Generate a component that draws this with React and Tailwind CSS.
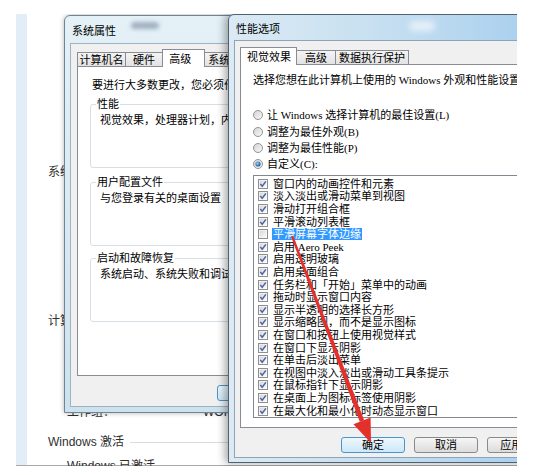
const F = "font-['Liberation_Serif','Noto_Sans_CJK_SC',serif]";

const effects = [
  { t: "窗口内的动画控件和元素", on: true },
  { t: "淡入淡出或滑动菜单到视图", on: true },
  { t: "滑动打开组合框", on: true },
  { t: "平滑滚动列表框", on: true },
  { t: "平滑屏幕字体边缘", on: false, sel: true },
  { t: "启用 Aero Peek", on: true },
  { t: "启用透明玻璃", on: true },
  { t: "启用桌面组合", on: true },
  { t: "任务栏和「开始」菜单中的动画", on: true },
  { t: "拖动时显示窗口内容", on: true },
  { t: "显示半透明的选择长方形", on: true },
  { t: "显示缩略图，而不是显示图标", on: true },
  { t: "在窗口和按钮上使用视觉样式", on: true },
  { t: "在窗口下显示阴影", on: true },
  { t: "在单击后淡出菜单", on: true },
  { t: "在视图中淡入淡出或滑动工具条提示", on: true },
  { t: "在鼠标指针下显示阴影", on: true },
  { t: "在桌面上为图标标签使用阴影", on: true },
  { t: "在最大化和最小化时动态显示窗口", on: true },
];

const radios = [
  { t: "让 Windows 选择计算机的最佳设置(L)" },
  { t: "调整为最佳外观(B)" },
  { t: "调整为最佳性能(P)" },
  { t: "自定义(C):", on: true },
];

function Check({ on }) {
  return (
    <svg width="10" height="10" viewBox="0 0 10 10" className="shrink-0">
      <defs>
        <linearGradient id="cbg" x1="0" y1="0" x2="1" y2="1">
          <stop offset="0" stopColor="#d6d6d6" />
          <stop offset="1" stopColor="#fbfbfb" />
        </linearGradient>
      </defs>
      <rect x="0.5" y="0.5" width="9" height="9" fill="#fff" stroke="#8f8f8f" />
      <rect x="1.5" y="1.5" width="7" height="7" fill="url(#cbg)" />
      {on && <path d="M2.3 4.9 L4.2 7.3 L7.9 2.4" fill="none" stroke="#4a64a6" strokeWidth="1.5" />}
    </svg>
  );
}

function Radio({ on }) {
  return (
    <svg width="10" height="10" viewBox="0 0 10 10" className="shrink-0">
      <defs>
        <linearGradient id="rbg" x1="0" y1="0" x2="1" y2="1">
          <stop offset="0" stopColor="#d2d2d2" />
          <stop offset="1" stopColor="#fafafa" />
        </linearGradient>
        <radialGradient id="rdot" cx="0.4" cy="0.4" r="0.6">
          <stop offset="0" stopColor="#8ed0f8" />
          <stop offset="1" stopColor="#1f5b9a" />
        </radialGradient>
      </defs>
      <circle cx="5" cy="5" r="4.5" fill="url(#rbg)" stroke="#949494" />
      {on && <circle cx="5" cy="5" r="2.6" fill="url(#rdot)" />}
    </svg>
  );
}

function Btn({ children, main }) {
  return (
    <div
      className={`w-[64px] h-[16px] shrink-0 rounded-[3px] border flex items-center justify-center text-[11px] leading-[14px] bg-linear-to-b ${
        main ? "border-[#4a95cc] from-[#eef7fd] to-[#cde8f8]" : "border-[#8a8a8a] from-[#f6f6f6] to-[#dcdcdc]"
      }`}
    >
      {children}
    </div>
  );
}

function Tab({ children, w, sel }) {
  return sel ? (
    <div className={`${w} h-[18px] -mb-px -ml-px z-10 bg-white border border-b-0 border-[#898c95] flex items-start pt-[1px] pl-[6px]`}>
      {children}
    </div>
  ) : (
    <div className={`${w} h-[14px] -ml-px first:ml-0 bg-linear-to-b from-[#f4f4f4] to-[#e2e2e2] border border-b-0 border-[#898c95] flex items-center justify-center leading-[12px]`}>
      {children}
    </div>
  );
}

function Group({ label, text, className }) {
  return (
    <div className={`relative ml-[12px] w-[300px] h-[64px] border border-[#d5dfe5] rounded-[3px] pt-[8px] pl-[9px] ${className}`}>
      <span className="absolute -top-[8px] left-[5px] bg-white px-[1px] leading-[14px]">{label}</span>
      <p className="leading-[14px] whitespace-nowrap">{text}</p>
    </div>
  );
}

export default function App() {
  return (
    <div className="relative w-[540px] h-[475px] bg-white overflow-hidden text-black">
      <div className="relative ml-[16px] mt-[14px] w-[501px] h-[452px] overflow-hidden">
        {/* 控制面板 - 系统 页面（背景） */}
        <div className="flex h-[452px] border-b border-[#a8a8a8]">
          <div className="w-[11px] bg-[#e3edf8]" />
          <div className="flex-1 flex flex-col pl-[21px] text-[12px] text-[#2f2f2f] font-['Liberation_Sans','Noto_Sans_CJK_SC',sans-serif] whitespace-nowrap">
            <p className="mt-[150px] leading-[16px]">系统</p>
            <p className="mt-[133px] leading-[16px]">计算机名称、域和工作组设置</p>
            <div className="mt-[75px] flex leading-[16px] pl-[19px]">
              <span className="w-[136px]">工作组：</span>
              <span>WORKGROUP</span>
            </div>
            <div className="mt-[14px] flex items-center leading-[16px]">
              <span>Windows 激活</span>
              <div className="flex-1 ml-[6px] border-t border-[#dcdcdc]" />
            </div>
            <p className="mt-[8px] pl-[19px] leading-[16px]">Windows 已激活</p>
          </div>
        </div>

        {/* 系统属性 */}
        <div className={`absolute left-[48px] top-[1px] w-[200px] h-[398px] rounded-t-[6px] border border-[#6f8494] bg-linear-to-b from-[#e4f1f7] to-[#cde2ee] shadow-[0_0_5px_rgba(0,0,0,0.3)] flex flex-col px-[5px] pb-[5px] text-[11px] ${F}`}>
          <div className="absolute left-[66px] top-[6px] w-[28px] h-[7px] rounded-full bg-[#8e9fb2] blur-[2px] opacity-80" />
          <div className="h-[27px] shrink-0 flex items-center pl-[2px] pt-[2px] leading-[14px]">系统属性</div>
          <div className="flex-1 bg-[#f0f0f0] border border-[#9db3c3] flex flex-col overflow-hidden">
            <div className="h-[22px] shrink-0 flex items-end pl-[6px] whitespace-nowrap">
              <Tab w="w-[55px]">计算机名</Tab>
              <Tab w="w-[43px]">硬件</Tab>
              <Tab w="w-[47px]" sel>高级</Tab>
              <Tab w="w-[60px]">系统保护</Tab>
            </div>
            <div className="ml-[6px] w-[240px] h-[310px] shrink-0 bg-white border border-[#898c95] pt-[11px]">
              <p className="pl-[14px] leading-[14px] whitespace-nowrap">要进行大多数更改，您必须作为管理员登录。</p>
              <Group className="mt-[12px]" label="性能" text="视觉效果，处理器计划，内存使用，以及虚拟内存" />
              <Group className="mt-[14px]" label="用户配置文件" text="与您登录有关的桌面设置" />
              <Group className="mt-[12px]" label="启动和故障恢复" text="系统启动、系统失败和调试信息" />
            </div>
            <div className="mt-[9px] pl-[146px] flex">
              <Btn main>确定</Btn>
            </div>
          </div>
        </div>

        {/* 性能选项 */}
        <div className={`absolute left-[212px] top-0 w-[310px] h-[449px] rounded-t-[6px] border border-[#4f6272] bg-linear-to-r from-[#dbeaf4] via-[#c6dff0] to-[#a7cfee] shadow-[-3px_0_8px_rgba(0,0,0,0.35)] flex flex-col px-[5px] pb-[4px] text-[11px] ${F}`}>
          <div className="absolute left-[180px] top-[6px] w-[26px] h-[10px] rounded-full bg-white blur-[3px] opacity-60" />
          <div className="h-[25px] shrink-0 flex items-center pl-[2px] pt-[3px] leading-[14px]">性能选项</div>
          <div className="flex-1 bg-[#f0f0f0] border border-[#8ea3b6] flex flex-col overflow-hidden">
            <div className="h-[23px] shrink-0 flex items-end pl-[6px] whitespace-nowrap">
              <Tab w="w-[57px]" sel>视觉效果</Tab>
              <Tab w="w-[40px]">高级</Tab>
              <Tab w="w-[74px]">数据执行保护</Tab>
            </div>
            <div className="ml-[5px] w-[300px] h-[364px] shrink-0 bg-white border border-[#898c95] pt-[8px] pl-[12px] whitespace-nowrap">
              <p className="leading-[14px]">选择您想在此计算机上使用的 Windows 外观和性能设置</p>
              <div className="mt-[20px] flex flex-col">
                {radios.map((r) => (
                  <div key={r.t} className="h-[16.4px] flex items-center gap-[4px] leading-[14px]">
                    <Radio on={r.on} />
                    <span>{r.t}</span>
                  </div>
                ))}
              </div>
              <div className="mt-[2px] h-[243px] border border-[#828790] py-[2px] pl-[4px]">
                {effects.map((e) => (
                  <div key={e.t} className="h-[12.6px] flex items-center gap-[5px] leading-[12px]">
                    <Check on={e.on} />
                    <span className={e.sel ? "-ml-px px-px bg-[#3399ff] text-white" : ""}>{e.t}</span>
                  </div>
                ))}
              </div>
            </div>
            <div className="mt-[9px] pl-[106px] flex gap-[9px]">
              <Btn main>确定</Btn>
              <Btn>取消</Btn>
              <Btn>应用(A)</Btn>
            </div>
          </div>
        </div>
      </div>

      {/* 红色箭头 */}
      <svg className="absolute inset-0 pointer-events-none" width="540" height="475" viewBox="0 0 540 475">
        <polygon points="291,236.5 293.2,235.6 364.2,420.2 359.8,421.8" fill="#e3302b" />
        <polygon points="371,443 370.6,417.6 353.4,424.2" fill="#e3302b" />
      </svg>
    </div>
  );
}
